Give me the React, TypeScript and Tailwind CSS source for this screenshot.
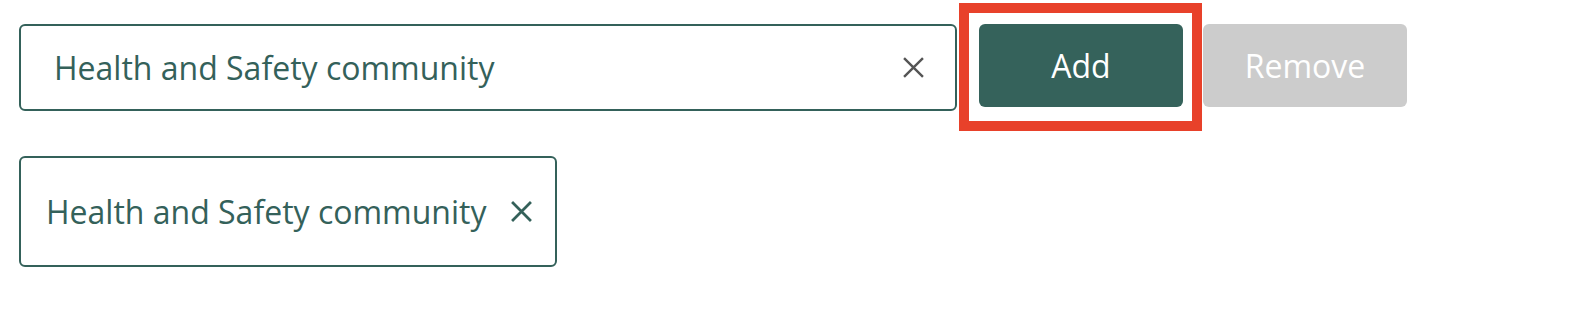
import React from "react";

function XIcon({ className, stroke = 2.5 }: { className?: string; stroke?: number }) {
  return (
    <svg viewBox="0 0 20 20" className={className} fill="none" stroke="currentColor" strokeWidth={stroke} strokeLinecap="butt">
      <path d="M1 1 L19 19 M19 1 L1 19" />
    </svg>
  );
}

export default function App() {
  return (
    <div className="w-[1574px] h-[310px] bg-white pl-[19px] pt-[24px] font-['Open_Sans',sans-serif]">
      <div className="flex items-start">
        <div className="flex items-center w-[938px] h-[87px] border-2 border-[#34615a] rounded-[6px] pl-[33px] pr-[31px]">
          <span className="flex-1 text-[32px] leading-none text-[#34615a]">Health and Safety community</span>
          <XIcon className="w-[21px] h-[21px] text-[#555555]" stroke={2.3} />
        </div>
        <div className="relative ml-[22px]">
          <button className="w-[204px] h-[83px] rounded-[6px] bg-[#35625b] text-white text-[32px] font-medium leading-none">
            Add
          </button>
          <span className="pointer-events-none absolute -left-[20px] -right-[19px] -top-[21px] -bottom-[24px] border-[10px] border-[#e8412a]" />
        </div>
        <button className="ml-[20px] w-[204px] h-[83px] rounded-[6px] bg-[#cccccc] text-white text-[32px] font-medium leading-none">
          Remove
        </button>
      </div>
      <div className="mt-[45px] inline-flex items-center h-[111px] border-2 border-[#34615a] rounded-[6px] pl-[25px] pr-[22px]">
        <span className="text-[32px] leading-none text-[#34615a]">Health and Safety community</span>
        <XIcon className="ml-[24px] w-[23px] h-[21px] text-[#34615a]" stroke={2.6} />
      </div>
    </div>
  );
}
